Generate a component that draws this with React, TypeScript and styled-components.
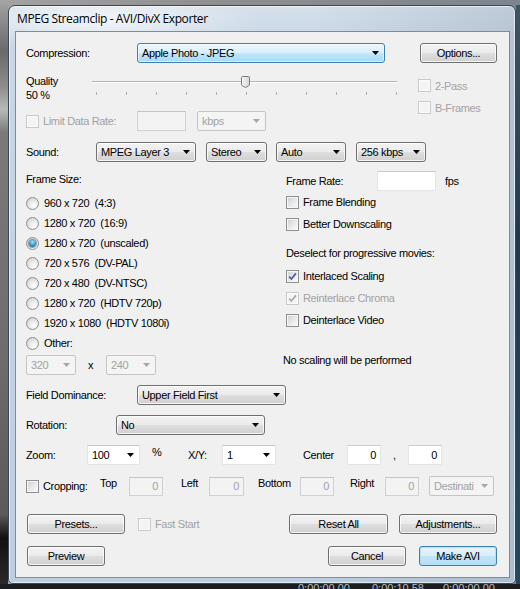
import React from 'react'
import styled, { createGlobalStyle, css } from 'styled-components'

const GlobalStyle = createGlobalStyle`
  * { box-sizing: border-box; }
  html, body { margin: 0; padding: 0; }
  body { width: 520px; height: 589px; overflow: hidden; background: #7a7a7a; }
`

type ComboKind = 'normal' | 'focus' | 'disabled' | 'edit'

const Desktop = styled.div`
  width: 520px;
  height: 589px;
  overflow: hidden;
  display: flex;
  flex-direction: column;
  background: linear-gradient(to right, #a3a3a3 0, #8f8f8f 40%, #7b8590 100%);
  font-family: "Liberation Sans", Arial, sans-serif;
  font-size: 11px;
  letter-spacing: -0.35px;
  color: #000;
`

const Stage = styled.div`
  display: flex;
  margin-top: 5px;
`

const LeftStrip = styled.div`
  width: 8px;
  background: linear-gradient(#9e9e9e 0, #6a6a6a 8%, #8c8c8c 14%, #b9b9b9 18%, #7a7a7a 22%, #6d6d6d 60%, #5a5a5a 88%, #111 92%, #2a2a2a 100%);
`

const RightStrip = styled.div`
  flex: 1;
  background: linear-gradient(#3e5664, #1f3b4b 40%, #24495c 100%);
`

const BottomStrip = styled.div`
  height: 5px;
  overflow: hidden;
  display: flex;
  background: #1b1e21;
  color: #b8bcc0;
  font-size: 11px;
  line-height: 11px;
  letter-spacing: 0;
`

const TimeCode = styled.span<{ $ml: number }>`
  margin-left: ${p => p.$ml}px;
  margin-top: -1px;
  white-space: nowrap;
`

const Window = styled.div`
  width: 508px;
  height: 579px;
  border: 1px solid #3b4754;
  border-radius: 7px 7px 5px 5px;
  padding: 0 5px 5px 6px;
  display: flex;
  flex-direction: column;
  background:
    radial-gradient(ellipse 160px 30px at 90px 14px, rgba(255, 255, 255, 0.75), rgba(255, 255, 255, 0) 100%),
    linear-gradient(to right, rgba(255, 255, 255, 0) 60%, rgba(120, 140, 160, 0.25) 100%),
    linear-gradient(#d5e0eb 0, #c9d7e5 6%, #c0d1e2 60%, #bccfe2 100%);
  box-shadow: inset 0 0 0 1px rgba(255, 255, 255, 0.6);
`

const TitleBar = styled.div`
  height: 25px;
  display: flex;
  align-items: center;
  padding-left: 2px;
  font-family: "Open Sans", "Noto Sans", sans-serif;
  font-size: 12px;
  letter-spacing: -0.4px;
  color: #000;
`

const Client = styled.div`
  flex: 1;
  border: 1px solid #7c8c9c;
  background: #f0f0f0;
  padding: 0 12px 0 10px;
  display: flex;
  flex-direction: column;
`

const Row = styled.div<{ $mt: number; $h?: number }>`
  display: flex;
  align-items: center;
  margin-top: ${p => p.$mt}px;
  height: ${p => p.$h ?? 20}px;
  flex: none;
`

const Columns = styled.div<{ $mt: number }>`
  display: flex;
  align-items: flex-start;
  margin-top: ${p => p.$mt}px;
  flex: none;
`

const Column = styled.div<{ $w?: number; $mt?: number; $gap?: number }>`
  display: flex;
  flex-direction: column;
  ${p => p.$w !== undefined && css`width: ${p.$w}px;`}
  margin-top: ${p => p.$mt ?? 0}px;
  gap: ${p => p.$gap ?? 0}px;
  flex: none;
`

const Text = styled.span<{ $w?: number; $pl?: number; $ml?: number; $dim?: boolean; $top?: boolean }>`
  flex: none;
  ${p => p.$w !== undefined && css`width: ${p.$w}px;`}
  padding-left: ${p => p.$pl ?? 0}px;
  margin-left: ${p => p.$ml ?? 0}px;
  color: ${p => (p.$dim ? '#a2a2a2' : '#000')};
  white-space: pre;
  ${p => p.$top && css`align-self: flex-start; line-height: 14px;`}
`

const Spacer = styled.div`
  flex: 1;
`

const QualityLabel = styled.div`
  width: 66px;
  line-height: 14px;
  align-self: flex-start;
  flex: none;
`

const Slider = styled.div`
  width: 305px;
  height: 28px;
  position: relative;
  display: flex;
  flex-direction: column;
  align-self: flex-start;
`

const Track = styled.div`
  margin-top: 7px;
  height: 2px;
  border-top: 1px solid #b4b4b4;
  border-bottom: 1px solid #ffffff;
`

const Ticks = styled.div`
  margin: 9px 0 0 4px;
  width: 301px;
  height: 3px;
  display: flex;
  justify-content: space-between;
`

const Tick = styled.span`
  width: 1px;
  height: 3px;
  background: #b0b0b0;
`

const Thumb = styled.svg`
  position: absolute;
  left: 149px;
  top: 2px;
`

const comboSkins: Record<ComboKind, ReturnType<typeof css>> = {
  normal: css`
    border: 1px solid #707070;
    border-radius: 3px;
    background: linear-gradient(#f3f3f3 0%, #ebebeb 48%, #dedede 52%, #d0d0d0 100%);
    box-shadow: inset 0 0 0 1px rgba(255, 255, 255, 0.75);
  `,
  focus: css`
    border: 1px solid #3c7fb1;
    border-radius: 3px;
    background: linear-gradient(#eaf6fd 0%, #d9f0fc 48%, #bee6fd 52%, #a7d9f5 100%);
    box-shadow: inset 0 0 0 1px rgba(255, 255, 255, 0.6);
  `,
  disabled: css`
    border: 1px solid #c3c6c9;
    border-radius: 2px;
    background: #f4f4f4;
    color: #a2a2a2;
  `,
  edit: css`
    border: 1px solid #e2e5e9;
    border-top-color: #c5c9ce;
    background: #ffffff;
  `,
}

const ComboBox = styled.div<{ $w: number; $kind: ComboKind; $h?: number }>`
  width: ${p => p.$w}px;
  height: ${p => p.$h ?? 20}px;
  flex: none;
  display: flex;
  align-items: center;
  justify-content: space-between;
  padding: 0 5px 0 4px;
  white-space: nowrap;
  overflow: hidden;
  ${p => comboSkins[p.$kind]}
`

const Field = styled.div<{ $w: number; $h?: number; $disabled?: boolean }>`
  width: ${p => p.$w}px;
  height: ${p => p.$h ?? 20}px;
  flex: none;
  display: flex;
  align-items: center;
  justify-content: flex-end;
  padding-right: 4px;
  border: 1px solid ${p => (p.$disabled ? '#cfd2d5' : '#e2e5e9')};
  border-top-color: ${p => (p.$disabled ? '#c1c4c8' : '#c9cdd2')};
  background: ${p => (p.$disabled ? '#f3f3f3' : '#ffffff')};
  color: ${p => (p.$disabled ? '#a2a2a2' : '#000')};
`

const Button = styled.button<{ $w: number; $ml?: number; $primary?: boolean }>`
  width: ${p => p.$w}px;
  height: 20px;
  margin-left: ${p => p.$ml ?? 0}px;
  flex: none;
  padding: 0;
  font: inherit;
  letter-spacing: inherit;
  color: #000;
  border-radius: 3px;
  border: 1px solid ${p => (p.$primary ? '#3c7fb1' : '#707070')};
  background: ${p =>
    p.$primary
      ? 'linear-gradient(#e6f4fc 0%, #d8eefa 48%, #c4e4f6 52%, #b6dcf2 100%)'
      : 'linear-gradient(#f3f3f3 0%, #ebebeb 48%, #dedede 52%, #d0d0d0 100%)'};
  box-shadow: inset 0 0 0 1px ${p => (p.$primary ? 'rgba(170, 225, 250, 0.9)' : 'rgba(255, 255, 255, 0.75)')};
`

const CheckRow = styled.label<{ $h?: number }>`
  display: flex;
  align-items: center;
  gap: 4px;
  height: ${p => p.$h ?? 22}px;
  flex: none;
`

const Box = styled.span<{ $disabled?: boolean }>`
  width: 13px;
  height: 13px;
  flex: none;
  display: flex;
  align-items: center;
  justify-content: center;
  border: 1px solid ${p => (p.$disabled ? '#c8c9ca' : '#8e8f8f')};
  background: ${p =>
    p.$disabled ? '#f4f4f4' : 'linear-gradient(135deg, #c9cdd2 0%, #e4e6e8 45%, #fbfbfb 100%)'};
  box-shadow: inset 0 0 0 1px ${p => (p.$disabled ? '#fbfbfb' : '#f6f6f6')};
`

const RadioDot = styled.span<{ $on?: boolean }>`
  width: 13px;
  height: 13px;
  flex: none;
  border-radius: 50%;
  border: 1px solid #8e8f8f;
  display: flex;
  align-items: center;
  justify-content: center;
  background: radial-gradient(circle at 65% 70%, #ffffff 0, #eeeeee 35%, #c6c9cd 100%);
  ${p =>
    p.$on &&
    css`
      &::after {
        content: '';
        width: 7px;
        height: 7px;
        border-radius: 50%;
        background: radial-gradient(circle at 50% 30%, #a6e8fd 0, #3fa3d3 45%, #145d8a 100%);
        box-shadow: 0 0 0 1px rgba(30, 70, 100, 0.5);
      }
    `}
`

const Arrow = ({ dim }: { dim?: boolean }) => (
  <svg width="7" height="4" viewBox="0 0 7 4">
    <path d="M0 0h7L3.5 4z" fill={dim ? '#a8a8a8' : '#000'} />
  </svg>
)

const Combo = ({ w, value, kind = 'normal', h }: { w: number; value: string; kind?: ComboKind; h?: number }) => (
  <ComboBox $w={w} $kind={kind} $h={h}>
    <span>{value}</span>
    <Arrow dim={kind === 'disabled'} />
  </ComboBox>
)

const Check = ({
  label,
  checked,
  disabled,
  h,
}: {
  label: string
  checked?: boolean
  disabled?: boolean
  h?: number
}) => (
  <CheckRow $h={h}>
    <Box $disabled={disabled}>
      {checked && (
        <svg width="9" height="9" viewBox="0 0 9 9">
          <path
            d="M1.2 4.6 L3.4 7 L7.9 1.4"
            fill="none"
            stroke={disabled ? '#a9a9a9' : '#4a5d96'}
            strokeWidth="1.7"
          />
        </svg>
      )}
    </Box>
    <Text $dim={disabled}>{label}</Text>
  </CheckRow>
)

const Radio = ({ label, on }: { label: string; on?: boolean }) => (
  <CheckRow $h={20}>
    <RadioDot $on={on} />
    <Text $pl={1}>{label}</Text>
  </CheckRow>
)

const frameSizes = [
  '960 x 720  (4:3)',
  '1280 x 720  (16:9)',
  '1280 x 720  (unscaled)',
  '720 x 576  (DV-PAL)',
  '720 x 480  (DV-NTSC)',
  '1280 x 720  (HDTV 720p)',
  '1920 x 1080  (HDTV 1080i)',
  'Other:',
]

export default function App() {
  return (
    <Desktop>
      <GlobalStyle />
      <Stage>
        <LeftStrip />
        <Window>
          <TitleBar>MPEG Streamclip - AVI/DivX Exporter</TitleBar>
          <Client>
            <Row $mt={11}>
              <Text $w={111}>Compression:</Text>
              <Combo w={248} value="Apple Photo - JPEG" kind="focus" />
              <Spacer />
              <Button $w={77}>Options...</Button>
            </Row>

            <Columns $mt={11}>
              <Column $w={392}>
                <Row $mt={0} $h={28}>
                  <QualityLabel>
                    Quality
                    <br />
                    50 %
                  </QualityLabel>
                  <Slider>
                    <Track />
                    <Ticks>
                      {Array.from({ length: 11 }, (_, i) => (
                        <Tick key={i} />
                      ))}
                    </Ticks>
                    <Thumb width="9" height="12" viewBox="0 0 9 12">
                      <defs>
                        <linearGradient id="thumb" x1="0" y1="0" x2="1" y2="0">
                          <stop offset="0" stopColor="#fafafa" />
                          <stop offset="1" stopColor="#d4d4d4" />
                        </linearGradient>
                      </defs>
                      <path
                        d="M1.5 0.5 H7.5 Q8.5 0.5 8.5 1.5 V8 Q8.5 9 7.6 9.8 L4.5 11.5 L1.4 9.8 Q0.5 9 0.5 8 V1.5 Q0.5 0.5 1.5 0.5 Z"
                        fill="url(#thumb)"
                        stroke="#7a7a7a"
                      />
                    </Thumb>
                  </Slider>
                </Row>
                <Row $mt={9}>
                  <CheckRow $h={20}>
                    <Box $disabled />
                    <Text $w={94} $dim>
                      Limit Data Rate:
                    </Text>
                  </CheckRow>
                  <Field $w={49} $disabled />
                  <Text $w={11} />
                  <Combo w={69} value="kbps" kind="disabled" />
                </Row>
              </Column>
              <Column $mt={5} $gap={9}>
                <Check label="2-Pass" disabled h={13} />
                <Check label="B-Frames" disabled h={13} />
              </Column>
            </Columns>

            <Row $mt={11}>
              <Text $w={70}>Sound:</Text>
              <Combo w={100} value="MPEG Layer 3" />
              <Text $w={10} />
              <Combo w={61} value="Stereo" />
              <Text $w={9} />
              <Combo w={70} value="Auto" />
              <Text $w={10} />
              <Combo w={70} value="256 kbps" />
            </Row>

            <Columns $mt={0}>
              <Column $w={260}>
                <Row $mt={7}>
                  <Text>Frame Size:</Text>
                </Row>
                <Column $mt={4}>
                  {frameSizes.map((s, i) => (
                    <Radio key={s} label={s} on={i === 2} />
                  ))}
                </Column>
                <Row $mt={2}>
                  <Combo w={50} value="320" kind="disabled" />
                  <Text $w={30} $pl={12}>
                    x
                  </Text>
                  <Combo w={50} value="240" kind="disabled" />
                </Row>
              </Column>
              <Column>
                <Row $mt={9}>
                  <Text $w={91}>Frame Rate:</Text>
                  <Field $w={59} />
                  <Text $pl={9}>fps</Text>
                </Row>
                <Check label="Frame Blending" />
                <Check label="Better Downscaling" />
                <Row $mt={8}>
                  <Text>Deselect for progressive movies:</Text>
                </Row>
                <Column $mt={2}>
                  <Check label="Interlaced Scaling" checked />
                  <Check label="Reinterlace Chroma" checked disabled />
                  <Check label="Deinterlace Video" />
                </Column>
                <Row $mt={19}>
                  <Text $ml={-3}>No scaling will be performed</Text>
                </Row>
              </Column>
            </Columns>

            <Row $mt={10}>
              <Text $w={111}>Field Dominance:</Text>
              <Combo w={149} value="Upper Field First" />
            </Row>

            <Row $mt={10}>
              <Text $w={90}>Rotation:</Text>
              <Combo w={149} value="No" />
            </Row>

            <Row $mt={10}>
              <Text $w={61}>Zoom:</Text>
              <Combo w={53} value="100" kind="edit" />
              <Text $w={48} $pl={12} $top>
                %
              </Text>
              <Text $w={34}>X/Y:</Text>
              <Combo w={54} value="1" kind="edit" />
              <Text $w={71} $pl={27}>
                Center
              </Text>
              <Field $w={34}>0</Field>
              <Text $w={27} $pl={12}>
                ,
              </Text>
              <Field $w={34}>0</Field>
            </Row>

            <Row $mt={11}>
              <CheckRow $h={20}>
                <Box />
                <Text $w={57}>Cropping:</Text>
              </CheckRow>
              <Text $w={29} $top>
                Top
              </Text>
              <Field $w={34} $h={19} $disabled>
                0
              </Field>
              <Text $w={46} $pl={18} $top>
                Left
              </Text>
              <Field $w={35} $h={19} $disabled>
                0
              </Field>
              <Text $w={56} $pl={14} $top>
                Bottom
              </Text>
              <Field $w={34} $h={19} $disabled>
                0
              </Field>
              <Text $w={51} $pl={16} $top>
                Right
              </Text>
              <Field $w={34} $h={19} $disabled>
                0
              </Field>
              <Text $w={10} />
              <Combo w={65} value="Destinati" kind="disabled" />
            </Row>

            <Row $mt={18}>
              <Button $w={98} $ml={1}>
                Presets...
              </Button>
              <Text $w={13} />
              <Check label="Fast Start" disabled h={20} />
              <Spacer />
              <Button $w={99}>Reset All</Button>
              <Button $w={98} $ml={11}>
                Adjustments...
              </Button>
            </Row>

            <Row $mt={12}>
              <Button $w={78} $ml={1}>
                Preview
              </Button>
              <Spacer />
              <Button $w={78}>Cancel</Button>
              <Button $w={78} $ml={13} $primary>
                Make AVI
              </Button>
            </Row>
          </Client>
        </Window>
        <RightStrip />
      </Stage>
      <BottomStrip>
        <TimeCode $ml={298}>0:00:00.00</TimeCode>
        <TimeCode $ml={22}>0:00:10.58</TimeCode>
        <TimeCode $ml={19}>0:00:00.00</TimeCode>
      </BottomStrip>
    </Desktop>
  )
}
